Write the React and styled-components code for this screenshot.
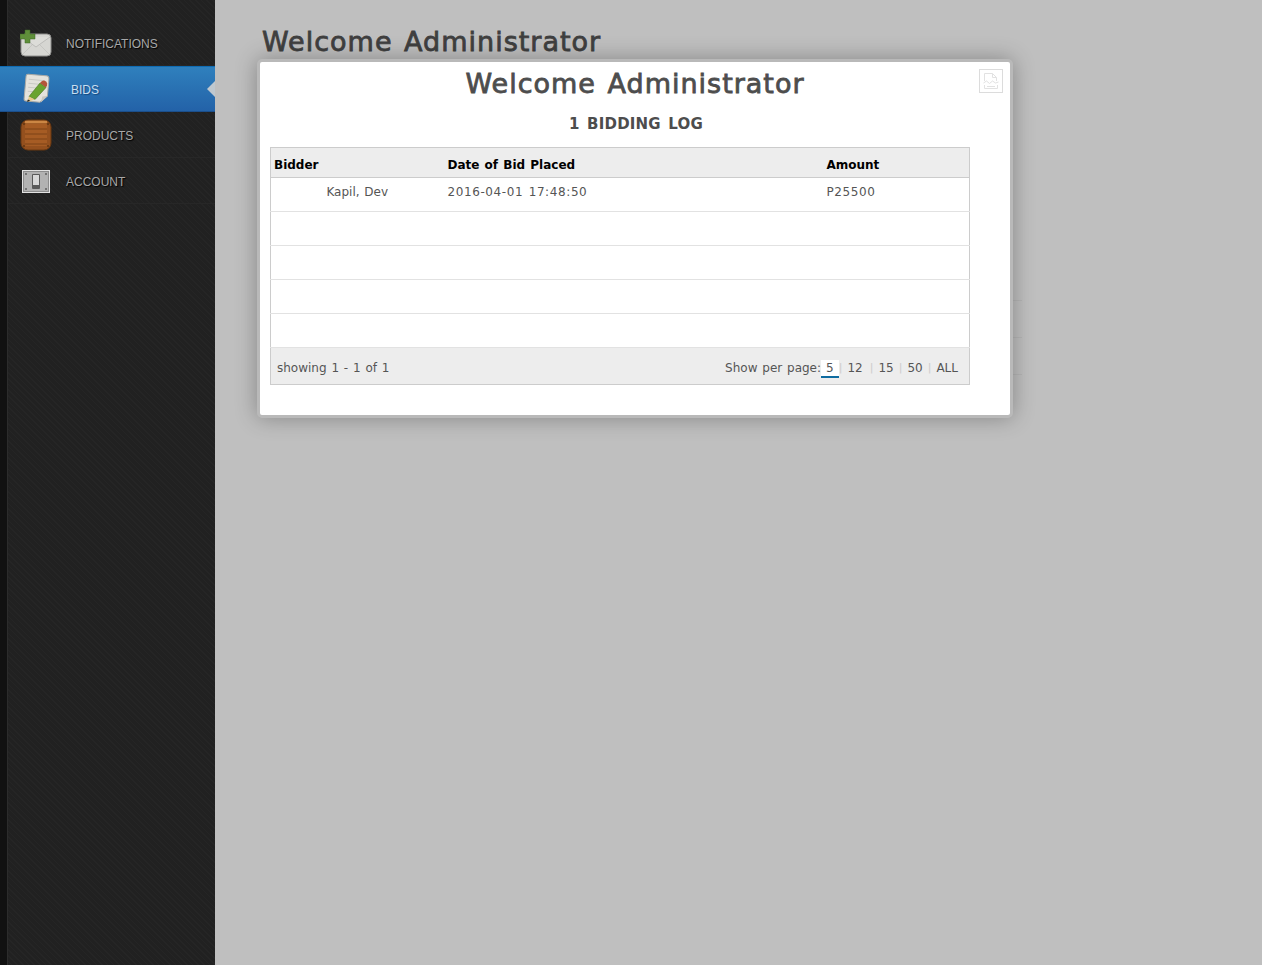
import React from "react";
import styled, { createGlobalStyle } from "styled-components";

const GlobalStyle = createGlobalStyle`
  html, body {
    margin: 0;
    padding: 0;
    height: 100%;
    background: #bfbfbf;
    font-family: "DejaVu Sans", Verdana, sans-serif;
    overflow: hidden;
  }
`;

const Page = styled.div`
  display: flex;
  width: 100%;
  height: 965px;
  position: relative;
`;

const Sidebar = styled.nav`
  width: 215px;
  flex: none;
  box-sizing: border-box;
  padding: 20px 0 0 8px;
  background-color: #222;
  background-image:
    linear-gradient(to right, #111 0, #111 7px, #2c2c2c 7px, #2c2c2c 8px, transparent 8px),
    repeating-linear-gradient(45deg, #252525 0, #252525 1px, #212121 1px, #212121 4px);
`;

const MenuItem = styled.a`
  display: flex;
  align-items: center;
  height: 46px;
  box-sizing: border-box;
  padding: 2px 0 0 12px;
  gap: 14px;
  color: #a8a8a8;
  font-family: "Liberation Sans", Arial, sans-serif;
  font-size: 12px;
  text-shadow: 1px 1px 1px #000;
  border-bottom: 1px solid #272727;
`;

const ActiveItem = styled.a`
  display: flex;
  align-items: center;
  position: relative;
  height: 46px;
  margin-left: -8px;
  box-sizing: border-box;
  padding: 2px 0 0 21px;
  gap: 18px;
  color: #c8dff0;
  font-family: "Liberation Sans", Arial, sans-serif;
  font-size: 12px;
  text-shadow: 1px 1px 1px #14497f;
  border-top: 1px solid #0f6cb4;
  border-bottom: 1px solid #1b4f8c;
  background: linear-gradient(to bottom, #2f80bd, #2362a8);

  &::after {
    content: "";
    position: absolute;
    right: 0;
    top: 14px;
    border: 8px solid transparent;
    border-left: 0;
    border-right: 8px solid #bfc8cf;
  }
`;

const IconSlot = styled.span`
  display: flex;
  width: 32px;
  height: 32px;
  flex: none;
  margin-top: -2px;
`;

const Main = styled.main`
  flex: 1;
  min-width: 0;
  padding: 27px 0 0 47px;
`;

const PageTitle = styled.h1`
  margin: 0;
  font-size: 27px;
  line-height: 30px;
  font-weight: 400;
  color: #3f3f3f;
  letter-spacing: 1px;
  word-spacing: 2px;
  -webkit-text-stroke: 0.8px #3f3f3f;
`;

const BackTable = styled.div`
  width: 760px;
  margin-top: 207px;
`;

const BackRow = styled.div`
  height: 36px;
  border-bottom: 1px solid #b6b6b6;
`;

const Modal = styled.section`
  position: absolute;
  left: 257px;
  top: 59px;
  width: 740px;
  height: 353px;
  background: #fff;
  border: 3px solid #b9b9b9;
  border-radius: 5px;
  box-shadow: 0 0 22px rgba(0, 0, 0, 0.3);
  padding: 0 0 0 10px;
`;

const ModalTitle = styled.h2`
  margin: 6px 0 0;
  padding-right: 10px;
  text-align: center;
  font-size: 27px;
  line-height: 32px;
  font-weight: 400;
  color: #4d4d4d;
  letter-spacing: 1px;
  word-spacing: 2px;
  -webkit-text-stroke: 0.8px #4d4d4d;
`;

const ModalSubtitle = styled.h3`
  margin: 14px 0 13px;
  padding-left: 2px;
  padding-right: 10px;
  text-align: center;
  font-size: 15px;
  line-height: 20px;
  font-weight: 700;
  color: #4d4d4d;
  letter-spacing: 0.2px;
  word-spacing: 2px;
`;

const ExportButton = styled.button`
  position: absolute;
  top: 7px;
  right: 7px;
  width: 24px;
  height: 24px;
  padding: 0;
  display: flex;
  align-items: center;
  justify-content: center;
  background: #fff;
  border: 1px solid #dcdcdc;
`;

const Grid = styled.table`
  width: 700px;
  border-collapse: collapse;
  table-layout: fixed;
  border: 1px solid #ccc;
  font-size: 12px;
  color: #555;
`;

const HeadCell = styled.th`
  height: 30px;
  box-sizing: border-box;
  padding: 5px 0 0 3px;
  background: #ededed;
  border-bottom: 1px solid #ccc;
  color: #000;
  text-align: left;
  font-weight: 700;
  word-spacing: 1px;
`;

const Row = styled.tr`
  height: 34px;
  border-bottom: 1px solid #e2e2e2;
`;

const Cell = styled.td`
  padding: 0 ${(p) => (p.$center ? "4px" : "0")} 5px 3px;
  letter-spacing: ${(p) => (p.$center ? "0" : "0.6px")};
  word-spacing: 1px;
  text-align: ${(p) => (p.$center ? "center" : "left")};
`;

const FootCell = styled.td`
  height: 36px;
  padding: 0 6px 0 6px;
  background: #ededed;
  border-top: 1px solid #e2e2e2;
`;

const FootBar = styled.div`
  display: flex;
  justify-content: space-between;
  align-items: center;
  padding-top: 3px;
  font-size: 12px;
  color: #555;
  word-spacing: 1px;
`;

const Pager = styled.div`
  display: flex;
  align-items: center;
`;

const PageLink = styled.span`
  display: inline-block;
  height: ${(p) => (p.$active ? "16px" : "auto")};
  line-height: 16px;
  padding: 0 ${(p) => (p.$wide ? "7px" : "5px")} 0 5px;
  background: ${(p) => (p.$active ? "#fff" : "transparent")};
  border-bottom: ${(p) => (p.$active ? "2px solid #0f6ca0" : "none")};
  margin-top: ${(p) => (p.$active ? "2px" : "0")};
`;

const PageSep = styled.span`
  color: #ccc;
  font-size: 11px;
`;

const MailIcon = () => (
  <svg width="32" height="32" viewBox="0 0 32 32">
    <rect x="1" y="7" width="30" height="22" rx="4" fill="#d6d6d2" stroke="#8f8f8d" />
    <path d="M2 10l14 10 14-10" fill="#dcdcd8" stroke="#bcbcb9" />
    <path d="M3 27l9-9M29 27l-9-9" stroke="#c6c6c2" fill="none" />
    <path d="M5 3h5v4h5v5h-5v4H5v-4H0V7h5z" fill="#5f8f3a" stroke="#3f6a24" strokeWidth="0.5" />
  </svg>
);

const NoteIcon = () => (
  <svg width="32" height="32" viewBox="0 0 32 32">
    <g transform="rotate(5 16 16)">
      <path d="M6 2h18q3 0 3 3v17l-7 7H6q-2 0-2-2V4q0-2 2-2z" fill="#e4e2dc" stroke="#a9a9a5" />
      <path d="M21 29l1-6 5-1z" fill="#c9c7c0" />
      <path d="M7 7h16M7 11h16M7 15h14M7 19h9" stroke="#c9c9c4" />
    </g>
    <path d="M19 10l6 4.500-11 12-6-3z" fill="#69a32f" stroke="#43701c" strokeWidth="0.6" />
    <path d="M19 10l2-2q2-1 4 .5t1 4l-1 2z" fill="#b4553a" />
    <path d="M6 29l2-5.500 6 3z" fill="#e8c98a" />
    <path d="M6 29l.9-2.500 2.300 1.200z" fill="#222" />
  </svg>
);

const CrateIcon = () => (
  <svg width="32" height="32" viewBox="0 0 32 32">
    <rect x="1" y="1" width="30" height="30" rx="7" fill="#94501e" stroke="#6a3811" />
    <rect x="5" y="5" width="22" height="22" rx="1" fill="#a65c24" />
    <path d="M5 10h22M5 15h22M5 20h22M5 25h22" stroke="#7c4217" />
    <path d="M6 3h20" stroke="#cb8644" strokeWidth="2.500" strokeLinecap="round" />
    <g fill="#3d2009">
      <circle cx="4" cy="5" r="0.800" />
      <circle cx="28" cy="5" r="0.800" />
      <circle cx="4" cy="27" r="0.800" />
      <circle cx="28" cy="27" r="0.800" />
    </g>
  </svg>
);

const SwitchIcon = () => (
  <svg width="32" height="32" viewBox="0 0 32 32">
    <rect x="2.500" y="5.500" width="27" height="22" fill="#b2b2b2" stroke="#e2e2e2" />
    <rect x="3.500" y="6.500" width="25" height="20" fill="none" stroke="#8c8c8c" />
    <rect x="12" y="9" width="8" height="15" rx="1" fill="#5a5a5a" />
    <rect x="13" y="10" width="6" height="10" fill="#d8d8d8" />
    <g fill="#222">
      <circle cx="6" cy="9" r="0.800" />
      <circle cx="26" cy="9" r="0.800" />
      <circle cx="6" cy="24" r="0.800" />
      <circle cx="26" cy="24" r="0.800" />
    </g>
  </svg>
);

const BrokenImageIcon = () => (
  <svg width="18" height="18" viewBox="0 0 18 18" fill="none" stroke="#e2e2e2">
    <path d="M2.500 9V1.500h8l4 4V9" />
    <path d="M10.500 1.500v4h4" />
    <path d="M1.500 11l3-2 3 2.500 3-2.500 3 2 3-1" />
    <path d="M2.500 13v3.500h13V13M5 14.500h8" />
  </svg>
);

const rows = [
  { bidder: "Kapil, Dev", date: "2016-04-01 17:48:50", amount: "P25500" },
  {},
  {},
  {},
  {},
];

const pageSizes = ["12", "15", "50", "ALL"];

export default function App() {
  return (
    <>
      <GlobalStyle />
      <Page>
        <Sidebar>
          <MenuItem>
            <IconSlot><MailIcon /></IconSlot>
            NOTIFICATIONS
          </MenuItem>
          <ActiveItem>
            <IconSlot><NoteIcon /></IconSlot>
            BIDS
          </ActiveItem>
          <MenuItem>
            <IconSlot><CrateIcon /></IconSlot>
            PRODUCTS
          </MenuItem>
          <MenuItem>
            <IconSlot><SwitchIcon /></IconSlot>
            ACCOUNT
          </MenuItem>
        </Sidebar>
        <Main>
          <PageTitle>Welcome Administrator</PageTitle>
          <BackTable>
            <BackRow />
            <BackRow />
            <BackRow />
          </BackTable>
        </Main>
        <Modal>
          <ExportButton aria-label="Export"><BrokenImageIcon /></ExportButton>
          <ModalTitle>Welcome Administrator</ModalTitle>
          <ModalSubtitle>1 BIDDING LOG</ModalSubtitle>
          <Grid>
            <colgroup>
              <col width="174" />
              <col width="379" />
              <col />
            </colgroup>
            <thead>
              <tr>
                <HeadCell>Bidder</HeadCell>
                <HeadCell>Date of Bid Placed</HeadCell>
                <HeadCell>Amount</HeadCell>
              </tr>
            </thead>
            <tbody>
              {rows.map((row, i) => (
                <Row key={i}>
                  <Cell $center>{row.bidder}</Cell>
                  <Cell>{row.date}</Cell>
                  <Cell>{row.amount}</Cell>
                </Row>
              ))}
            </tbody>
            <tfoot>
              <tr>
                <FootCell colSpan={3}>
                  <FootBar>
                    <span>showing 1 - 1 of 1</span>
                    <Pager>
                      <span>Show per page:</span>
                      <PageLink $active>5</PageLink>
                      {pageSizes.map((size) => (
                        <React.Fragment key={size}>
                          <PageSep>|</PageSep>
                          <PageLink $wide={size === "12"}>{size}</PageLink>
                        </React.Fragment>
                      ))}
                    </Pager>
                  </FootBar>
                </FootCell>
              </tr>
            </tfoot>
          </Grid>
        </Modal>
      </Page>
    </>
  );
}
